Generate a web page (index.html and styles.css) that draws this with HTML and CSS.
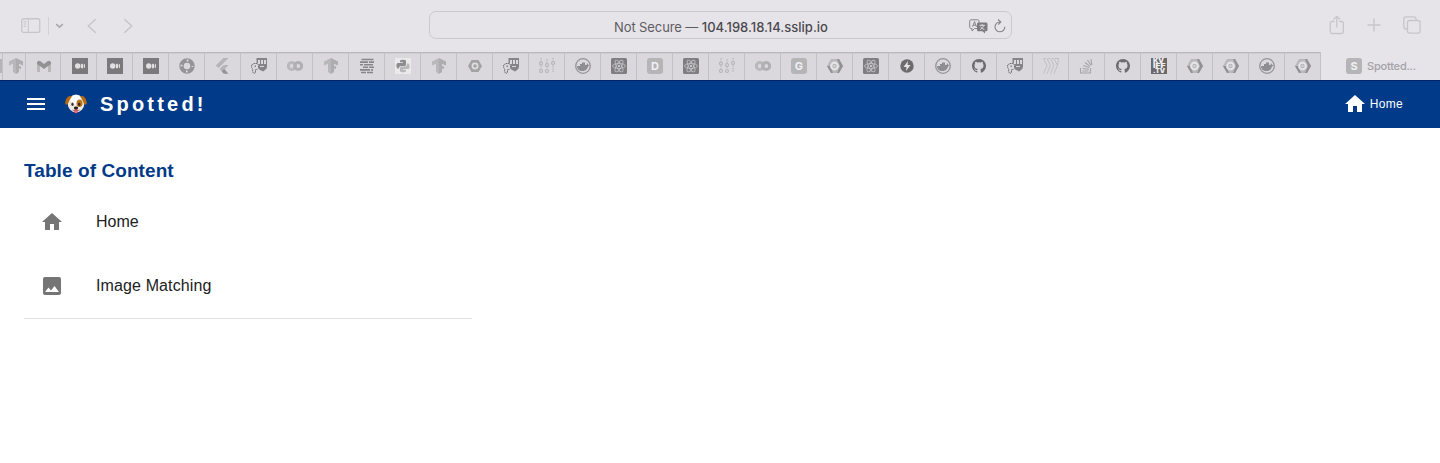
FILE: index.html
```html
<!DOCTYPE html>
<html lang="en">
<head>
<meta charset="utf-8">
<title>Spotted!</title>
<link rel="stylesheet" href="styles.css">
</head>
<body>
<svg class="defs" aria-hidden="true">
  <symbol id="tf" viewBox="0 0 16 16"><path fill="#b8b7ba" d="M8 0L1 3.500v4L5 5.800V14l3 2z"/><path fill="#adacaf" d="M8 0l7 3.500v4l-4-1.700v2l2 .9v2.500l-2-.9V14l-3 2z"/></symbol>
  <symbol id="gmail" viewBox="0 0 16 16"><path fill="#b7b6b9" d="M1 4h3v10H2a1 1 0 0 1-1-1zM12 4h3v9a1 1 0 0 1-1 1h-2z"/><path fill="#929194" d="M1 5c0-2 2-3 3.500-1.800L8 6l3.500-2.800C13 2 15 3 15 5v1l-7 5-7-5z"/></symbol>
  <symbol id="medium" viewBox="0 0 16 16"><path fill="#7b797c" d="M0 0h16v16H0z"/><g fill="#e0dfe2"><circle cx="5.700" cy="8" r="2.700"/><ellipse cx="10" cy="8" rx="1.300" ry="2.500"/><ellipse cx="12.400" cy="8" rx=".6" ry="2.200"/></g></symbol>
  <symbol id="ring" viewBox="0 0 16 16"><circle cx="8" cy="8" r="5.500" fill="none" stroke="#949396" stroke-width="4.400"/><circle cx="8" cy="8" r="5.500" fill="none" stroke="#dedde0" stroke-width="1.800" stroke-dasharray="1.800 6.840" stroke-dashoffset=".9"/></symbol>
  <symbol id="flutter" viewBox="0 0 16 16"><path fill="#b5b4b7" d="M8.500 0h5L3.500 10 .7 7.500zM8.500 7h5L9.500 11.500l2 2-2.500 2.200L4.500 11.200z"/><path fill="#949396" d="M6.700 13.200l2.500-2.200 4.300 4.800H9z"/></symbol>
  <symbol id="key" viewBox="0 0 16 16"><path fill="#858386" d="M5.500 0H16v8.500c0 2-1.500 3.500-4 5L7.500 11V6L5.500 5z"/><path fill="#dad8dd" d="M7 2h2v4H7zM10 2h2v4h-2zM13 2h2v4H13zM9 8h4v1H9z"/><path d="M3 5.500h3L7.500 7v3L6 11.500H4.500v3L3 15.500 1.700 14v-3L.6 9.500V7z" fill="#dad8dd" stroke="#757376" stroke-width="1" stroke-dasharray="1.500 .4"/><path fill="#858386" d="M3.500 7.500h1.500V9H3.500z"/></symbol>
  <symbol id="colab" viewBox="0 0 16 16"><g fill="none" stroke-width="3"><circle cx="4.800" cy="8" r="3.500" stroke="#b9b8bb"/><circle cx="11.200" cy="8" r="3.500" stroke="#b0afb2"/></g></symbol>
  <symbol id="bricks" viewBox="0 0 16 16"><path fill="none" stroke="#868588" stroke-width="1.600" d="M2.500 1.500h12M1 4.100h8m1 0h5M1 6.700h3m1 0h9M4 9.300h5m1 0h5M1 11.900h10m1 0h2M2 14.500h5m1 0h6"/></symbol>
  <symbol id="python" viewBox="0 0 16 16"><path fill="#eaeaeb" d="M0 0h16v16H0z"/><path fill="#8d8d8f" d="M5 2.500C6 1.500 10 1.500 11 2.500V6.500c0 1-1 1.500-1.500 1.500H6c-1.500 0-2 1-2 2.500H2.500C1 9 1 6 2.500 5H8v-.8H5z"/><path fill="#b8b8ba" d="M11 13.500c-1 1-5 1-6 0V10c0-1 1-1.500 1.500-1.500H10c1.500 0 2-1 2-3h1.500C15 7 15 10 13.500 11H8v.8h3z"/></symbol>
  <symbol id="nut" viewBox="0 0 16 16"><path fill="#a3a2a5" d="M4.500 2h7L15 8l-3.500 6h-7L1 8z"/><circle cx="8" cy="8" r="2.600" fill="#a3a2a5" stroke="#dedde0" stroke-width="1.700"/></symbol>
  <symbol id="nodes" viewBox="0 0 16 16"><g fill="none" stroke="#b6b5b8" stroke-width="1.200"><path stroke-dasharray="1.500 1" d="M2 0v15M8 1v15M14 0v15"/><g fill="#dad8dd"><circle cx="2" cy="5.500" r="1.500"/><circle cx="2" cy="13" r="1.500"/><circle cx="8" cy="7" r="1.500"/><circle cx="8" cy="13" r="1.500"/><circle cx="14" cy="5" r="1.500"/></g></g></symbol>
  <symbol id="docker" viewBox="0 0 16 16"><circle cx="8" cy="8" r="7.300" fill="none" stroke="#959497" stroke-width="1.300"/><path fill="#8e8d90" d="M2 8h3V6h2V4.500h3V7h1.500l.8-1.800L13.500 7l1 .3-1.500 1.200C12 12 10 13 7.500 13 4 13 2 11 2 8z"/></symbol>
  <symbol id="react" viewBox="0 0 16 16"><rect width="16" height="16" rx="1.500" fill="#7f7d80"/><g fill="none" stroke="#bfbec1" stroke-width=".9"><ellipse cx="8" cy="8" rx="6.500" ry="2.500"/><ellipse cx="8" cy="8" rx="6.500" ry="2.500" transform="rotate(60 8 8)"/><ellipse cx="8" cy="8" rx="6.500" ry="2.500" transform="rotate(120 8 8)"/></g><circle cx="8" cy="8" r="1.200" fill="#c5c4c7"/></symbol>
  <symbol id="gcp" viewBox="0 0 16 16"><path fill="#b9b8bb" d="M4 1h8l4 7-4 7H4L0 8z"/><path fill="#919093" d="M10 1h2l4 7-4 7h-2l3-7zM0 8h3l3 7H4z"/><circle cx="7.500" cy="8" r="3.300" fill="#b5b4b7" stroke="#e4e3e6" stroke-width="2.200"/><circle cx="7.500" cy="8" r="1.200" fill="#d3d2d5"/></symbol>
  <symbol id="bolt" viewBox="0 0 16 16"><circle cx="8" cy="8" r="6.700" fill="#6d6b6e"/><path fill="#e5e4e7" d="M9 3L4.500 9h3L7 13l4.500-6h-3z"/></symbol>
  <symbol id="github" viewBox="0 0 16 16"><path fill="#6d6b6e" d="M8 1C4 1 1 4 1 8c0 3 2 5.700 4.800 6.600.4 0 .5-.2.500-.4v-1.300c-2 .4-2.400-.8-2.400-.8-.3-.8-.8-1.100-.8-1.100-.6-.4.100-.4.100-.4.700 0 1.100.8 1.100.8.600 1 1.600.8 2 .6 0-.5.200-.8.400-1-1.600-.2-3.200-.8-3.200-3.500 0-.8.300-1.400.7-1.900-.1-.2-.3-.9.100-1.900 0 0 .6-.2 1.900.7a7 7 0 0 1 3.600 0c1.300-.9 1.900-.7 1.900-.7.400 1 .2 1.700.1 1.900.4.500.7 1.100.7 1.900 0 2.700-1.600 3.300-3.200 3.500.3.200.5.700.5 1.300v2c0 .2.100.4.500.4C13 13.700 15 11 15 8c0-4-3-7-7-7z"/></symbol>
  <symbol id="waves" viewBox="0 0 16 16"><path fill="none" stroke="#bdbcbf" stroke-width=".9" d="M.5.500l3.500 7-3.500 8M4 .5l3.500 7-3.500 8M7.500 .5l3.500 7-3.500 8M11 .5l3.500 7-3.500 8M1 .5h2M5 .5h2M9 .5h2M12 .5h3.500l-1 7"/></symbol>
  <symbol id="stack" viewBox="0 0 16 16"><path fill="none" stroke="#a5a4a7" stroke-width="1.100" d="M1.500 10v5h10v-5M3.500 13h6M3.600 10.500l6.200.7M4.300 7.500l5.900 2M6 4.500l5 3.900M8.500 2l3.500 5.300M12 1l.8 6"/></symbol>
  <symbol id="home" viewBox="0 0 24 24"><path fill="currentColor" d="M10 20v-6h4v6h5v-8h3L12 3 2 12h3v8z"/></symbol>
</svg>

<header class="browser">
  <div class="toolbar">
    <div class="tools-left">
      <svg class="i-sidebar" width="20" height="16" viewBox="0 0 20 16"><rect x=".75" y=".75" width="18" height="13.700" rx="2" fill="none" stroke="#c7c5ca" stroke-width="1.300"/><path d="M7.300 1v13M2.700 3.700h2.500M2.700 6h2.500M2.700 8.300h2.500" stroke="#c7c5ca" fill="none"/></svg>
      <span class="rule"></span>
      <svg class="i-down" width="9" height="6" viewBox="0 0 9 6"><path d="M1.200 1.200L4.500 4.200l3.300-3" fill="none" stroke="#aaa9ad" stroke-width="1.700"/></svg>
      <svg class="i-back" width="10" height="16" viewBox="0 0 10 16"><path d="M8.700 1.200L1.200 8l7.500 6.800" fill="none" stroke="#c6c4c9" stroke-width="1.400"/></svg>
      <svg width="10" height="16" viewBox="0 0 10 16"><path d="M1.300 1.200L8.800 8l-7.500 6.800" fill="none" stroke="#c6c4c9" stroke-width="1.400"/></svg>
    </div>
    <div class="address">
      <span class="url"><span class="warn">Not Secure — </span>104.198.18.14.sslip.io</span>
      <span class="address-icons">
        <svg width="19" height="15" viewBox="0 0 19 15"><path d="M2.200.8h6.300c1 0 1.500.5 1.500 1.500v6c0 .8-.5 1.200-1.500 1.200H5.500L3 12V9.500h-.8C1.200 9.500.7 9 .7 8.300v-6C.7 1.300 1.200.8 2.200.8z" fill="none" stroke="#858387"/><path d="M3.500 7.800l2-5.200 2 5.200M4.200 6.200h2.600" fill="none" stroke="#858387"/><path d="M9.500 3.500h7.300c1 0 1.700.6 1.700 1.600v5.700c0 1-.7 1.500-1.700 1.500H16V14.500l-2.500-2.200h-4c-1 0-1.500-.5-1.500-1.500V5.100c0-1 .5-1.600 1.500-1.600z" fill="#7d7b7f"/><path d="M10.500 6.300h5.500M13.200 5v1.300M11.300 10.500c2-1 3-2.500 3.300-4M11.700 7.500c.7 1.500 2 2.600 3.700 3" fill="none" stroke="#e6e4e9" stroke-width=".9"/></svg>
        <svg width="12" height="14" viewBox="0 0 12 14"><path d="M6 3a4.900 4.900 0 1 0 4.800 4.800M4 .5L6.800 3 4.200 5.600" fill="none" stroke="#858387" stroke-width="1.100"/></svg>
      </span>
    </div>
    <div class="tools-right">
      <svg width="16" height="20" viewBox="0 0 16 20"><path d="M5.500 6.500H2.800c-1 0-1.500.5-1.500 1.500v9c0 1 .5 1.500 1.500 1.500h10c1 0 1.500-.5 1.500-1.500V8c0-1-.5-1.500-1.500-1.500h-2.500M7.800 12.500V1.500M4.500 4.500l3.300-3.200L11 4.500" fill="none" stroke="#c7c5ca" stroke-width="1.300"/></svg>
      <svg width="14" height="14" viewBox="0 0 14 14"><path d="M7 .5v13M.5 7h13" fill="none" stroke="#c7c5ca" stroke-width="1.400"/></svg>
      <svg width="18" height="18" viewBox="0 0 18 18"><path d="M4 13H3c-1.500 0-2.200-.7-2.200-2.200V3C.8 1.500 1.500.8 3 .8h7.800C12.300.8 13 1.500 13 3v1.300" fill="none" stroke="#c7c5ca" stroke-width="1.300"/><rect x="4.500" y="4.500" width="12.600" height="12.600" rx="2" fill="none" stroke="#c7c5ca" stroke-width="1.300"/></svg>
    </div>
  </div>
  <div class="tabs">
    <div class="tab tab-edge"><i class="sliver"></i></div>
    <div class="tab tab-cut"><svg class="fav"><use href="#tf"/></svg></div>
    <div class="tab tab-mail"><svg class="fav"><use href="#gmail"/></svg></div>
    <div class="tab tab-first"><svg class="fav"><use href="#medium"/></svg></div>
    <div class="tab"><svg class="fav"><use href="#medium"/></svg></div>
    <div class="tab"><svg class="fav"><use href="#medium"/></svg></div>
    <div class="tab"><svg class="fav"><use href="#ring"/></svg></div>
    <div class="tab"><svg class="fav"><use href="#flutter"/></svg></div>
    <div class="tab"><svg class="fav"><use href="#key"/></svg></div>
    <div class="tab"><svg class="fav"><use href="#colab"/></svg></div>
    <div class="tab"><svg class="fav"><use href="#tf"/></svg></div>
    <div class="tab"><svg class="fav"><use href="#bricks"/></svg></div>
    <div class="tab"><svg class="fav"><use href="#python"/></svg></div>
    <div class="tab"><svg class="fav"><use href="#tf"/></svg></div>
    <div class="tab"><svg class="fav"><use href="#nut"/></svg></div>
    <div class="tab"><svg class="fav"><use href="#key"/></svg></div>
    <div class="tab"><svg class="fav"><use href="#nodes"/></svg></div>
    <div class="tab"><svg class="fav"><use href="#docker"/></svg></div>
    <div class="tab"><svg class="fav"><use href="#react"/></svg></div>
    <div class="tab"><span class="letter">D</span></div>
    <div class="tab"><svg class="fav"><use href="#react"/></svg></div>
    <div class="tab"><svg class="fav"><use href="#nodes"/></svg></div>
    <div class="tab"><svg class="fav"><use href="#colab"/></svg></div>
    <div class="tab"><span class="letter">G</span></div>
    <div class="tab"><svg class="fav"><use href="#gcp"/></svg></div>
    <div class="tab"><svg class="fav"><use href="#react"/></svg></div>
    <div class="tab"><svg class="fav"><use href="#bolt"/></svg></div>
    <div class="tab"><svg class="fav"><use href="#docker"/></svg></div>
    <div class="tab"><svg class="fav"><use href="#github"/></svg></div>
    <div class="tab"><svg class="fav"><use href="#key"/></svg></div>
    <div class="tab"><svg class="fav"><use href="#waves"/></svg></div>
    <div class="tab"><svg class="fav"><use href="#stack"/></svg></div>
    <div class="tab"><svg class="fav"><use href="#github"/></svg></div>
    <div class="tab"><svg class="fav kviff" viewBox="0 0 16 16"><path fill="#6b696c" d="M0 0h16v16H0z"/><text x="2" y="5.200" textLength="11" lengthAdjust="spacingAndGlyphs">KV</text><text x="2" y="10.200" textLength="12.500" lengthAdjust="spacingAndGlyphs">IFF</text><text x="2" y="15.200" textLength="12" lengthAdjust="spacingAndGlyphs">.TV</text></svg></div>
    <div class="tab"><svg class="fav"><use href="#gcp"/></svg></div>
    <div class="tab"><svg class="fav"><use href="#gcp"/></svg></div>
    <div class="tab"><svg class="fav"><use href="#docker"/></svg></div>
    <div class="tab"><svg class="fav"><use href="#gcp"/></svg></div>
    <div class="tab-active"><span class="letter">S</span><span class="tab-title">Spotted...</span></div>
  </div>
</header>

<nav class="appbar">
  <svg class="menu" width="24" height="24" viewBox="0 0 24 24"><path fill="#fff" d="M3 18h18v-2H3zm0-5h18v-2H3zm0-7v2h18V6z"/></svg>
  <svg class="dog" width="22" height="20" viewBox="0 0 22 20"><ellipse cx="11" cy="9.500" rx="8.300" ry="9" fill="#efe9df"/><ellipse cx="11" cy="6" rx="5" ry="5" fill="#fff"/><path d="M5 2C2 2 0 7 .2 9.500c.2 1.800 2.300 1.300 3-.3C4 7 5.500 4 7 2.500zM17 2c3 0 5 5 4.800 7.500-.2 1.800-2.300 1.300-3-.3C18 7 16.500 4 15 2.500z" fill="#b4690e"/><ellipse cx="14.500" cy="9.300" rx="3" ry="3.800" fill="#b8741f"/><ellipse cx="7.500" cy="10.300" rx="1.200" ry="1.700" fill="#38342f"/><ellipse cx="14.200" cy="10.300" rx="1.200" ry="1.700" fill="#38251b"/><ellipse cx="11" cy="16.700" rx="2" ry="2.600" fill="#f0647c"/><ellipse cx="11" cy="14" rx="2.100" ry="1.400" fill="#1e1d1d"/><path d="M7.500 16c1.500 1 3 .5 3.500-.5.500 1 2 1.500 3.500.5" fill="none" stroke="#6c5952" stroke-width=".8"/></svg>
  <span class="brand">Spotted!</span>
  <a class="nav-home"><svg width="24" height="24"><use href="#home"/></svg><span>Home</span></a>
</nav>

<main class="content">
  <h1 class="heading">Table of Content</h1>
  <ul class="toc">
    <li class="toc-item"><svg width="24" height="24"><use href="#home"/></svg><span>Home</span></li>
    <li class="toc-item"><svg width="24" height="24" viewBox="0 0 24 24"><path fill="currentColor" d="M21 19V5c0-1.100-.9-2-2-2H5c-1.100 0-2 .9-2 2v14c0 1.100.9 2 2 2h14c1.100 0 2-.9 2-2zM8.500 13.500l2.500 3.010L14.500 12l4.500 6H5z"/></svg><span class="wide">Image Matching</span></li>
  </ul>
</main>
</body>
</html>
```

FILE: styles.css
```css
* { box-sizing: border-box; }
body { margin: 0; background: #fff; font-family: "Liberation Sans", Arial, sans-serif; }
svg { display: block; flex: none; }
.defs { width: 0; height: 0; position: absolute; }

.browser { height: 80px; background: #e6e4e9; }
.toolbar { height: 52px; display: grid; grid-template-columns: 429px 583px 1fr; align-items: start; }
.tools-left { display: flex; align-items: center; height: 52px; padding-left: 21px; }
.rule { width: 1px; height: 18px; margin-left: 7px; background: #d3d1d6; }
.i-down { margin-left: 6px; }
.i-back { margin: 0 26px 0 23px; }
.address { height: 28px; margin-top: 11px; border: 1px solid #cbc9ce; border-radius: 7px; display: grid; grid-template-columns: 184px 1fr auto; align-items: center; padding-right: 5px; }
.url { grid-column: 2; font: 500 13px/26px Inter, sans-serif; color: #4b494d; white-space: pre; padding-top: 2px; letter-spacing: 0; }
.warn { font-weight: 400; color: #5e5c60; letter-spacing: -.1px; }
.address-icons { display: flex; align-items: center; gap: 6px; }
.tools-right { display: flex; align-items: center; justify-content: flex-end; gap: 22px; height: 50px; padding-right: 19px; }

.tabs { height: 28px; display: flex; }
.tab { width: 36px; flex: none; border-right: 1px solid #c3c1c6; border-top: 1px solid #b9b7bc; background: #dad8dd; box-shadow: inset 0 1px #cfcdd2; padding: 5px 0 0 10px; }
.tab-edge { width: 3px; padding-left: 0; }
.sliver { display: block; width: 2px; height: 14px; margin-top: 1px; background: #b5b4b7; }
.tab-cut { width: 23px; padding-left: 5px; }
.tab-mail { width: 35px; }
.tab-first { padding-left: 11px; }
.fav { width: 16px; height: 16px; }
.letter { display: block; width: 16px; height: 16px; border-radius: 3px; background: #b5b4b6; color: #f1f0f2; font: 700 11px/17px Inter, sans-serif; text-align: center; }
.kviff text { font: 900 5.8px Inter, sans-serif; fill: #f0eff1; }
.tab-active { display: flex; align-items: center; gap: 5px; padding-left: 25px; }
.tab-title { font: 500 11px/16px Inter, sans-serif; color: #a4a2a6; letter-spacing: -.2px; }

.appbar { height: 48px; display: flex; align-items: center; padding: 0 37px 2px 24px; background: #003a88; border-top: 1px solid #00206a; color: #fff; }
.dog { margin-left: 17px; }
.brand { margin-left: 13px; font-size: 20px; font-weight: 700; letter-spacing: 3.2px; line-height: 24px; }
.nav-home { display: flex; align-items: center; gap: 3px; margin-left: auto; font-size: 12px; letter-spacing: .3px; }

.content { width: 472px; padding: 32px 0 0 24px; }
.heading { margin: 0; font-size: 19px; line-height: 22px; font-weight: 700; color: #003a88; letter-spacing: .08px; }
.toc { list-style: none; margin: 0; padding: 8px 0 0; height: 137px; border-bottom: 1px solid #e0e0e0; }
.toc-item { display: flex; align-items: center; gap: 32px; height: 64px; padding-left: 16px; font-size: 16px; color: #212121; }
.toc-item svg { color: #757575; }
.wide { letter-spacing: .12px; }
```
